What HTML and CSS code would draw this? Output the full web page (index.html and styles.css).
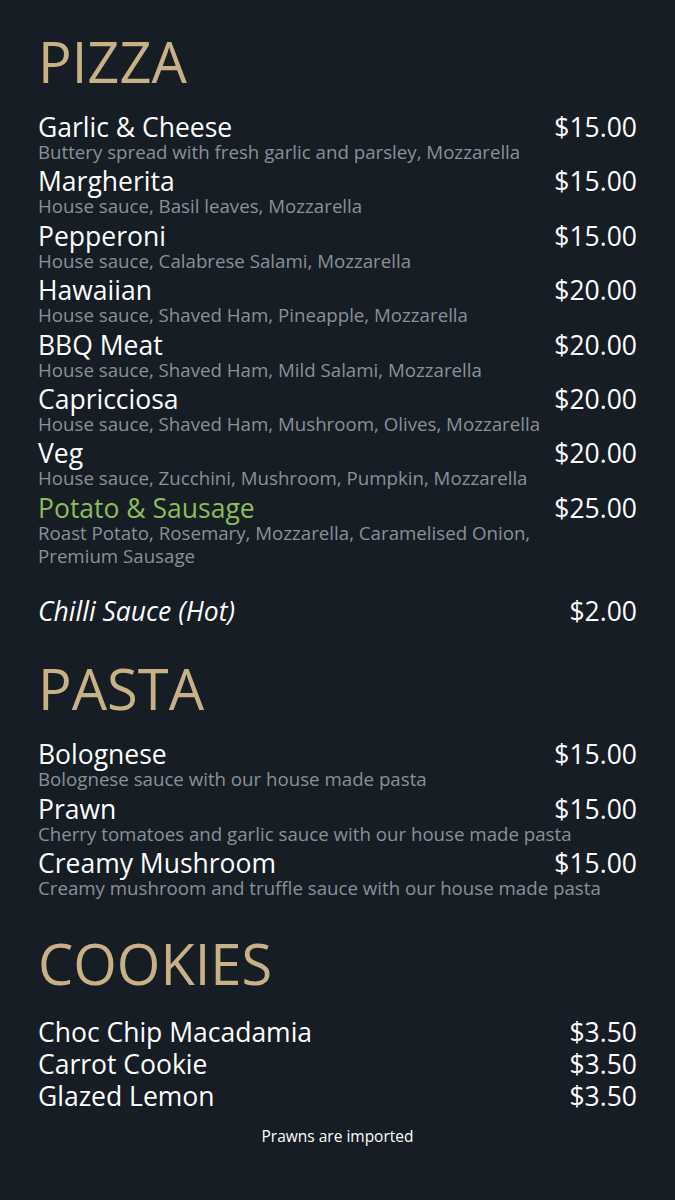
FILE: index.html
```html
<!DOCTYPE html>
<html lang="en">
<head>
    <meta charset="UTF-8">
    <meta name="viewport" content="width=device-width, initial-scale=1.0">
    <title>Menu</title>
    <link rel="stylesheet" href="styles.css">
</head>
<body>

    <main class="menu">
        <section class="section">
            <h2 class="section-title">PIZZA</h2>
            <ul class="items">
                <li class="item">
                    <span class="item-name">Garlic &amp; Cheese</span>
                    <span class="item-price">$15.00</span>
                    <p class="item-desc">Buttery spread with fresh garlic and parsley, Mozzarella</p>
                </li>
                <li class="item">
                    <span class="item-name">Margherita</span>
                    <span class="item-price">$15.00</span>
                    <p class="item-desc">House sauce, Basil leaves, Mozzarella</p>
                </li>
                <li class="item">
                    <span class="item-name">Pepperoni</span>
                    <span class="item-price">$15.00</span>
                    <p class="item-desc">House sauce, Calabrese Salami, Mozzarella</p>
                </li>
                <li class="item">
                    <span class="item-name">Hawaiian</span>
                    <span class="item-price">$20.00</span>
                    <p class="item-desc">House sauce, Shaved Ham, Pineapple, Mozzarella</p>
                </li>
                <li class="item">
                    <span class="item-name">BBQ Meat</span>
                    <span class="item-price">$20.00</span>
                    <p class="item-desc">House sauce, Shaved Ham, Mild Salami, Mozzarella</p>
                </li>
                <li class="item">
                    <span class="item-name">Capricciosa</span>
                    <span class="item-price">$20.00</span>
                    <p class="item-desc">House sauce, Shaved Ham, Mushroom, Olives, Mozzarella</p>
                </li>
                <li class="item">
                    <span class="item-name">Veg</span>
                    <span class="item-price">$20.00</span>
                    <p class="item-desc">House sauce, Zucchini, Mushroom, Pumpkin, Mozzarella</p>
                </li>
                <li class="item item-special">
                    <span class="item-name">Potato &amp; Sausage</span>
                    <span class="item-price">$25.00</span>
                    <p class="item-desc">Roast Potato, Rosemary, Mozzarella, Caramelised Onion, Premium Sausage</p>
                </li>
                <li class="item item-extra">
                    <span class="item-name">Chilli Sauce (Hot)</span>
                    <span class="item-price">$2.00</span>
                </li>
            </ul>
        </section>

        <section class="section">
            <h2 class="section-title">PASTA</h2>
            <ul class="items">
                <li class="item">
                    <span class="item-name">Bolognese</span>
                    <span class="item-price">$15.00</span>
                    <p class="item-desc">Bolognese sauce with our house made pasta</p>
                </li>
                <li class="item">
                    <span class="item-name">Prawn</span>
                    <span class="item-price">$15.00</span>
                    <p class="item-desc">Cherry tomatoes and garlic sauce with our house made pasta</p>
                </li>
                <li class="item">
                    <span class="item-name">Creamy Mushroom</span>
                    <span class="item-price">$15.00</span>
                    <p class="item-desc">Creamy mushroom and truffle sauce with our house made pasta</p>
                </li>
            </ul>
        </section>

        <section class="section">
            <h2 class="section-title">COOKIES</h2>
            <ul class="items items-compact">
                <li class="item">
                    <span class="item-name">Choc Chip Macadamia</span>
                    <span class="item-price">$3.50</span>
                </li>
                <li class="item">
                    <span class="item-name">Carrot Cookie</span>
                    <span class="item-price">$3.50</span>
                </li>
                <li class="item">
                    <span class="item-name">Glazed Lemon</span>
                    <span class="item-price">$3.50</span>
                </li>
            </ul>
        </section>

        <p class="note">Prawns are imported</p>
    </main>

</body>
</html>
```

FILE: styles.css
```css
body {
    font-family: "Open Sans", "Liberation Sans", sans-serif;
    background-color: #161d24;
    color: #fff;
    margin: 0;
    padding: 0;
    min-height: 100vh;
}

.menu {
    padding: 33px 38px 40px 38px;
}

.section {
    margin-bottom: 36px;
}

.section-title {
    font-size: 56px;
    font-weight: 400;
    line-height: 56px;
    color: #c8b087;
    margin: 0 0 25px 0;
}

.items {
    list-style: none;
    margin: 0;
    padding: 0;
    display: flex;
    flex-direction: column;
    gap: 5.4px;
}

.item {
    display: grid;
    grid-template-columns: 1fr auto;
}

.item-name,
.item-price {
    font-size: 26.5px;
    line-height: 26px;
}

.item-price {
    text-align: right;
}

.item-desc {
    grid-column: 1 / -1;
    margin: 0;
    font-size: 18.7px;
    line-height: 23px;
    color: #8a9198;
}

.item-special .item-name {
    color: #8dbd58;
}

.item-special .item-desc {
    max-width: 520px;
}

.item-extra {
    margin-top: 26px;
}

.item-extra .item-name {
    font-style: italic;
}

.items-compact {
    gap: 0;
}

.items-compact .item-name,
.items-compact .item-price {
    line-height: 32px;
}

.section:last-of-type {
    margin-bottom: 14px;
}

.note {
    text-align: center;
    font-size: 15.5px;
    line-height: 20px;
    margin: 0;
}
```
